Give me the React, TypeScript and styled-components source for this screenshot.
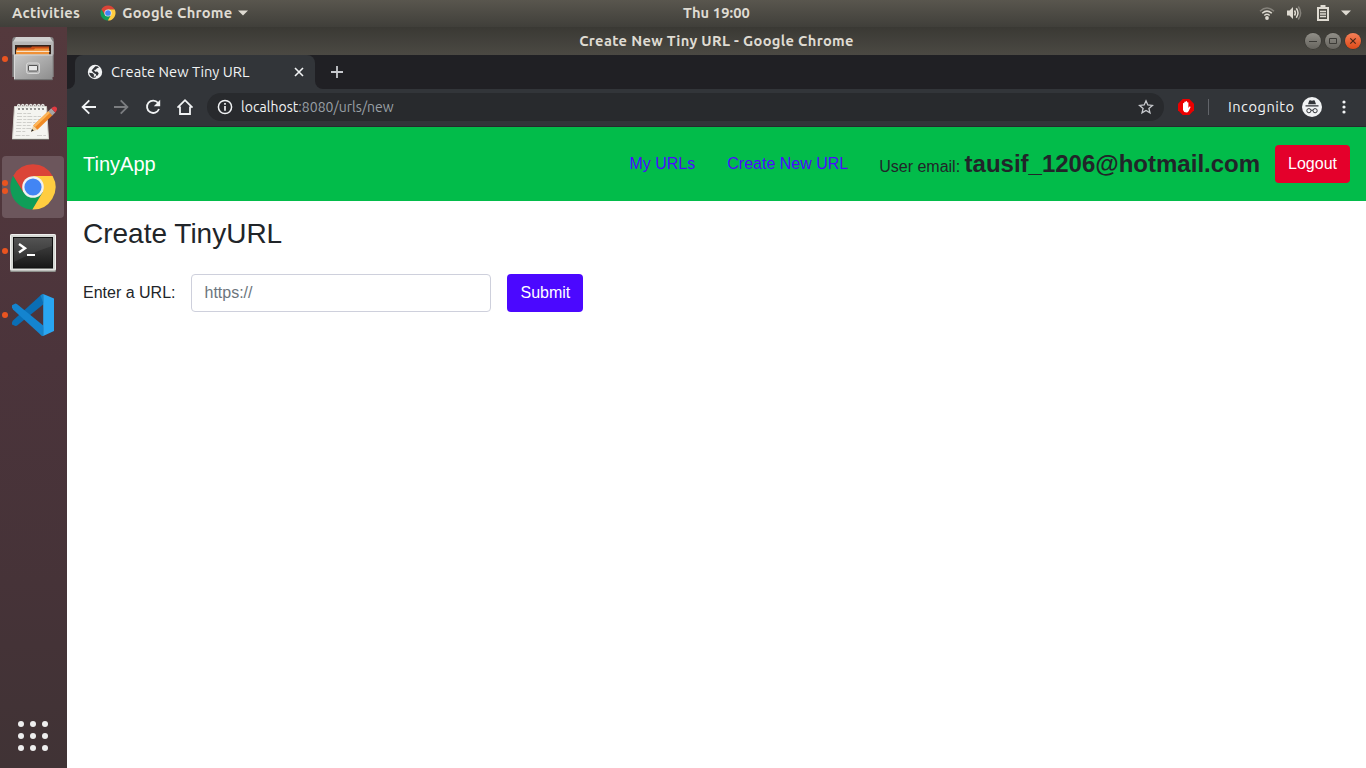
import React from "react";
import styled, { createGlobalStyle } from "styled-components";

const GlobalStyle = createGlobalStyle`
  * { box-sizing: border-box; }
  body { margin: 0; overflow: hidden; background: #fff; }
  button, input { font: inherit; margin: 0; }
`;

const uiFont = `"Ubuntu", "Noto Sans", "Open Sans", sans-serif`;

const Desktop = styled.div`
  width: 1366px;
  height: 768px;
  display: flex;
  flex-direction: column;
  font-family: ${uiFont};
`;

const TopBar = styled.header`
  height: 27px;
  flex: none;
  display: grid;
  grid-template-columns: 1fr auto 1fr;
  align-items: center;
  padding-bottom: 1px;
  background: linear-gradient(#59564e, #403f3a);
  color: #dfdbd2;
`;

const Label = styled.span<{ $size: number; $spacing?: number; $bold?: boolean; $color?: string }>`
  font-size: ${(p) => p.$size}px;
  letter-spacing: ${(p) => p.$spacing ?? 0}px;
  font-weight: ${(p) => (p.$bold ? 700 : 400)};
  color: ${(p) => p.$color ?? "inherit"};
  line-height: 20px;
  white-space: pre;
`;

const TopLeft = styled.div`
  display: flex;
  align-items: center;
  padding-left: 12px;
`;

const AppMenu = styled.div`
  display: flex;
  align-items: center;
  margin-left: 20px;
  gap: 6px;
`;

const Clock = styled.div`
  padding-left: 67px;
`;

const Tray = styled.div`
  display: flex;
  justify-content: flex-end;
  align-items: center;
  padding-right: 15px;
  svg { display: block; flex: none; }
`;

const Gap = styled.span<{ $w: number }>`
  flex: none;
  width: ${(p) => p.$w}px;
`;

const Main = styled.div`
  flex: 1;
  min-height: 0;
  display: flex;
`;

const Dock = styled.nav`
  width: 67px;
  flex: none;
  display: flex;
  flex-direction: column;
  justify-content: space-between;
  padding: 1px 3px 17px 2px;
  background: linear-gradient(#54393d, #4b343b 45%, #463338 75%, #403335);
`;

const DockApps = styled.div`
  display: flex;
  flex-direction: column;
  gap: 2px;
`;

const DockTile = styled.div<{ $active?: boolean }>`
  height: 62px;
  display: flex;
  align-items: center;
  border-radius: 4px;
  background: ${(p) => (p.$active ? "#6c565c" : "transparent")};
`;

const Dots = styled.div`
  width: 6px;
  display: flex;
  flex-direction: column;
  gap: 2px;
`;

const Dot = styled.i`
  width: 6px;
  height: 6px;
  border-radius: 50%;
  background: #e95420;
`;

const AppsButton = styled.div`
  display: grid;
  grid-template-columns: repeat(3, 6px);
  grid-template-rows: repeat(3, 6px);
  gap: 6px;
  margin-left: 16px;
  i { border-radius: 50%; background: #eee; }
`;

const Window = styled.section`
  flex: 1;
  min-width: 0;
  display: flex;
  flex-direction: column;
`;

const TitleBar = styled.div`
  height: 28px;
  flex: none;
  display: grid;
  grid-template-columns: 1fr auto 1fr;
  align-items: center;
  background: linear-gradient(#3a3934, #4b4943);
  color: #dfdbd2;
`;

const WindowButtons = styled.div`
  display: flex;
  justify-content: flex-end;
  gap: 4px;
  padding-right: 5px;
`;

const WindowButton = styled.span<{ $close?: boolean }>`
  width: 16px;
  height: 16px;
  border-radius: 50%;
  background: ${(p) => (p.$close ? "linear-gradient(#f58058, #df4a18)" : "linear-gradient(#918f88, #66645e)")};
  box-shadow: 0 0 0 0.5px #33322d;
  svg { display: block; }
`;

const TabStrip = styled.div`
  height: 34px;
  flex: none;
  display: flex;
  align-items: flex-end;
  background: #202024;
`;

const TabFoot = styled.span<{ $right?: boolean }>`
  width: 8px;
  height: 8px;
  background: #323539;
  &::before {
    content: "";
    display: block;
    width: 8px;
    height: 8px;
    background: #202024;
    border-radius: ${(p) => (p.$right ? "0 0 0 8px" : "0 0 8px 0")};
  }
`;

const Tab = styled.div`
  width: 240px;
  height: 34px;
  display: flex;
  align-items: center;
  padding: 0 10px 0 12px;
  background: #323539;
  border-radius: 8px 8px 0 0;
  color: #f1f3f4;
  svg { display: block; flex: none; }
`;

const TabTitle = styled.div`
  flex: 1;
  display: flex;
  padding-left: 8px;
`;

const NewTab = styled.div`
  height: 34px;
  display: flex;
  align-items: center;
  padding-left: 8px;
`;

const Toolbar = styled.div`
  height: 38px;
  flex: none;
  display: flex;
  align-items: center;
  padding: 0 13px 2px;
  background: #323539;
  border-bottom: 1px solid #28292d;
  color: #f1f3f4;
  svg { display: block; flex: none; }
`;

const NavIcons = styled.div`
  display: flex;
  gap: 14px;
`;

const AddressBar = styled.div`
  width: 957px;
  height: 28px;
  display: flex;
  align-items: center;
  margin: 0 12px 0 13px;
  padding: 0 9px 0 9px;
  border-radius: 14px;
  background: #282a2d;
`;

const Url = styled.div`
  flex: 1;
  padding-left: 7px;
`;

const Divider = styled.span`
  width: 1px;
  height: 16px;
  background: #62656a;
`;

const Incognito = styled.div`
  width: 74px;
  display: flex;
`;

const Page = styled.main`
  flex: 1;
  background: #fff;
  color: #212529;
  font: 16px/24px "Liberation Sans", Arial, sans-serif;
`;

const Navbar = styled.div`
  height: 74px;
  display: flex;
  align-items: center;
  justify-content: space-between;
  padding: 0 16px;
  background: #02bc4a;
`;

const Brand = styled.a`
  font-size: 20px;
  line-height: 30px;
  color: #fff;
`;

const NavLinks = styled.div`
  display: flex;
  align-items: center;
`;

const NavLink = styled.a`
  margin-right: 32px;
  padding-bottom: 1px;
  color: #4b08ff;
  &:nth-child(2) { margin-right: 31px; }
`;

const UserEmail = styled.span`
  margin-right: 15px;
  padding-top: 2px;
  line-height: 36px;
  b { font-size: 24px; }
`;

const Button = styled.button<{ $bg: string }>`
  height: 38px;
  padding: 0 13px;
  border: 0;
  border-radius: 4px;
  color: #fff;
  background: ${(p) => p.$bg};
`;

const Content = styled.div`
  padding: 16px;
`;

const Heading = styled.h1`
  margin: 0 0 23px;
  font-size: 28px;
  font-weight: 400;
  line-height: 34px;
`;

const UrlForm = styled.form`
  display: flex;
  align-items: center;
  gap: 16px;
`;

const UrlInput = styled.input`
  width: 300px;
  height: 38px;
  padding: 6px 12px;
  border: 1px solid #ced0dc;
  border-radius: 4px;
  background: #fff;
  &::placeholder { color: #6c757d; opacity: 1; }
`;

const ChromeLogo = ({ size }: { size: number }) => (
  <svg width={size} height={size} viewBox="0 0 48 48">
    <path d="M4.3 12.8A22.5 22.5 0 0 0 23.6 46.5L33.5 29.5 24 24 14.5 29.5Z" fill="#0f9d58" />
    <path d="M24 13H43.6A22.5 22.5 0 0 1 23.4 46.5L33.5 29.5Z" fill="#ffcd40" />
    <path d="M4.3 12.8A22.5 22.5 0 0 1 43.6 13H24L14.5 29.5Z" fill="#db4437" />
    <circle cx="24" cy="24" r="10.8" fill="#f1f1f1" />
    <circle cx="24" cy="24" r="8.6" fill="#4285f4" />
  </svg>
);

const FilesIcon = () => (
  <svg width="50" height="50" viewBox="8 34 50 50">
    <defs>
      <linearGradient id="cabinet" x1="0" y1="0" x2="1" y2="1">
        <stop stopColor="#c9c9c9" /><stop offset="1" stopColor="#8c8c8c" />
      </linearGradient>
    </defs>
    <path d="M12.300 77V40q0-3 3-3h35.400q3 0 3 3v37Z" fill="#858585" />
    <path d="M13 42l3-5h34l3 5Z" fill="#cecece" />
    <path d="M12.500 41.500h41v13h-41Z" fill="#b7b7b7" />
    <path d="M15 45h36v10H15Z" fill="#33231c" />
    <path d="M17 47.500h14l1-1h17V51H17Z" fill="#c94f18" />
    <path d="M16 49.500h18l1-1h14v7H16Z" fill="#ef9137" />
    <path d="M16.500 51.400h33" stroke="#f7ead9" />
    <path d="M14 54.500h38.500V80H14Z" fill="url(#cabinet)" />
    <path d="M14 55h38.500M14.500 55v25" stroke="#d8d8d8" />
    <path d="M14 79.700h38.500" stroke="#6c6c6c" />
    <rect x="26.500" y="63" width="13" height="10.500" rx="2" fill="#b5b5b5" stroke="#d8d8d8" />
    <rect x="28.500" y="65.500" width="9" height="5.500" rx=".5" fill="#e7e7e7" stroke="#555" />
  </svg>
);

const NotesIcon = () => (
  <svg width="50" height="50" viewBox="8 98 50 50">
    <path d="M14.500 106.500H46.500L48.500 139H12.500Z" fill="#f4f4f0" stroke="#d2d2cb" />
    <path d="M12.500 139.500H49" stroke="#6e6a66" />
    <g stroke="#cfcfcb" strokeWidth="1" strokeDasharray="5 1.300 3 1">
      <path d="M17 113.500h14M17 116.500h24M17 119.500h26M16.500 122.500h19M16.500 125.500h14M16 128.500h17M16 131.500h10M15.500 135.500h14M37 135.500h9" />
    </g>
    <g fill="none" stroke="#e9e9e6" strokeWidth="1.400">
      <path d="M17.500 109v-2.500a1.300 2 0 0 1 2.600 0M21.500 109v-2.500a1.300 2 0 0 1 2.600 0M25.500 109v-2.500a1.300 2 0 0 1 2.600 0M29.500 109v-2.500a1.300 2 0 0 1 2.600 0M33.500 109v-2.500a1.300 2 0 0 1 2.600 0M37.500 109v-2.500a1.300 2 0 0 1 2.600 0M41.500 109v-2.500a1.300 2 0 0 1 2.600 0" />
    </g>
    <g fill="#666"><circle cx="19" cy="109" r=".9" /><circle cx="23" cy="109" r=".9" /><circle cx="27" cy="109" r=".9" /><circle cx="31" cy="109" r=".9" /><circle cx="35" cy="109" r=".9" /><circle cx="39" cy="109" r=".9" /><circle cx="43" cy="109" r=".9" /></g>
    <path d="M31 131.700l2.200-6.200 4.200 4.300Z" fill="#f0d5a5" />
    <path d="M31 131.700l1-2.800 1.800 1.700Z" fill="#222" />
    <path d="M33.200 125.500l15.300-14.500 4 4.200-15.100 14.600Z" fill="#f08a24" />
    <path d="M33.600 125.300l15-14.300 1.600 1.700-15 14.200Z" fill="#fdb75a" />
    <path d="M48.300 111.200l3-2.900 4 4.200-3 2.900Z" fill="#a5a5a5" />
    <path d="M51.300 108.300q3-3 5-1t-1 5.200Z" fill="#e23a41" />
  </svg>
);

const TerminalIcon = () => (
  <svg width="50" height="50" viewBox="8 226 50 50">
    <defs>
      <linearGradient id="screen" x1="0" y1="0" x2="0" y2="1">
        <stop stopColor="#474747" /><stop offset=".5" stopColor="#303030" /><stop offset="1" stopColor="#171717" />
      </linearGradient>
    </defs>
    <rect x="10" y="234" width="46" height="38" rx="1.500" fill="#8e908c" />
    <rect x="10.500" y="234.500" width="45" height="35.500" rx="1" fill="#d5d7d3" stroke="#f0f0ee" />
    <rect x="13.500" y="237.500" width="39" height="30.500" fill="url(#screen)" stroke="#111" />
    <path d="M14 238h38v8Q34 252 14 262Z" fill="#fff" opacity=".07" />
    <path d="M19 244l6 4.200-6 4.300" fill="none" stroke="#fff" strokeWidth="2.400" />
    <path d="M27 255h8" stroke="#fff" strokeWidth="2" />
  </svg>
);

const VsCodeIcon = () => (
  <svg width="50" height="50" viewBox="8 290 50 50">
    <path d="M12 322.300v2.200l3.300 1.500 1.500-.3L43.200 304.500V294L41 295 13 320.500Z" fill="#0a6eb5" />
    <path d="M12 307.500v-2.200l3.400-1.700 1.500.4L43.200 325.500V336l-2-.8L13 309.500Z" fill="#1484cf" />
    <path d="M43.200 294 54 298.500V331L43.200 336Z" fill="#29a6f2" />
    <path d="M43.200 294q-1.400 0-2.700 1.500L43.200 303ZM43.200 336q-1.400 0-2.700-1.500L43.200 327Z" fill="#1684c9" />
  </svg>
);

const Caret = () => (
  <svg width="10" height="6" viewBox="0 0 10 6"><path d="M0 .5h10L5 5.500Z" fill="#dfdbd2" /></svg>
);

const WifiIcon = () => (
  <svg width="16" height="16" viewBox="0 0 16 16" fill="none" stroke="#dfdbd2" strokeWidth="1.500">
    <path d="M1 6.200Q8-.3 15 6.200" stroke="#85827b" />
    <path d="M3.200 8.300Q8 3.900 12.800 8.300M5.300 10.500Q8 8.100 10.700 10.500" />
    <circle cx="8" cy="13" r="1.900" fill="#dfdbd2" stroke="none" />
  </svg>
);

const VolumeIcon = () => (
  <svg width="16" height="16" viewBox="0 0 16 16" fill="none" stroke="#dfdbd2" strokeWidth="1.500">
    <path d="M1 5.500h2.500L7 2v12L3.500 10.500H1Z" fill="#dfdbd2" stroke="none" />
    <path d="M8.500 5.500q1.800 2.500 0 5M10.300 3.300q3.400 4.700 0 9.400" />
    <path d="M12.300 1.500q4.700 6.500 0 13" stroke="#85827b" />
  </svg>
);

const BatteryIcon = () => (
  <svg width="12" height="16" viewBox="0 0 12 16">
    <path d="M3.500 0h5v2H12v14H0V2h3.500ZM2 4v10h8V4Z" fill="#dfdbd2" fillRule="evenodd" />
    <path d="M3 6.500h6M3 9h6M3 11.500h6" stroke="#dfdbd2" strokeWidth="1.300" />
  </svg>
);

const GlobeIcon = () => (
  <svg width="16" height="16" viewBox="0 0 16 16">
    <circle cx="8" cy="8" r="7.200" fill="#f1f3f4" />
    <path d="M8.300 2.300c1.500-.4 2.800.2 3.700 1.200L10 4.200 8.600 5.700 7 6 8.200 7.800l2-.4 1.500 1.800-1 2.200-1.700.4-.3 1.800c-3.300.8-6.200-1.800-6.500-4.900l3.500.5 1.600 1.900-.8 1.200 1.300.4 1-.9.3-1.600L7 9.200 5.600 7.700 4.600 6.600 6 4.700Z" fill="#323539" />
  </svg>
);

const StrokeIcon = styled.svg.attrs({ viewBox: "0 0 18 18", width: 18, height: 18 })<{ $dim?: boolean }>`
  fill: none;
  stroke: ${(p) => (p.$dim ? "#7b7d80" : "#f1f3f4")};
  stroke-width: 1.8;
`;

const IncognitoIcon = () => (
  <svg width="20" height="20" viewBox="0 0 20 20">
    <circle cx="10" cy="10" r="10" fill="#f1f3f4" />
    <path d="M6 7.300l1.300-3.700q.3-.6 1-.4l1.700.5 1.700-.5q.7-.2 1 .4L14 7.300ZM3.500 8.300h13v1.200h-13Z" fill="#323539" />
    <g fill="none" stroke="#323539" strokeWidth="1"><circle cx="6.900" cy="13.700" r="2.100" /><circle cx="13.100" cy="13.700" r="2.100" /><path d="M9 13.400q1-.7 2 0" /></g>
  </svg>
);

const BlockerIcon = () => (
  <svg width="16" height="16" viewBox="0 0 16 16">
    <path d="M4.700 0h6.600L16 4.700v6.600L11.300 16H4.700L0 11.300V4.700Z" fill="#eb0000" />
    <path d="M5 8V4.300q.7-.8 1.300 0V3q.7-.9 1.400 0v-.6q.7-.8 1.400 0V3.500q.7-.7 1.300 0V9l1-1.400q.9-.5 1.200.3l-1.900 4Q9.800 13.500 8.500 13.500 5.700 13.500 5 11Z" fill="#fff" />
  </svg>
);

export default function App() {
  return (
    <Desktop>
      <GlobalStyle />
      <TopBar>
        <TopLeft>
          <Label $size={14.667} $bold $spacing={0.3}>Activities</Label>
          <AppMenu>
            <ChromeLogo size={16} />
            <Label $size={14.667} $bold $spacing={0.28}>Google Chrome</Label>
            <Caret />
          </AppMenu>
        </TopLeft>
        <Clock><Label $size={14.667} $bold $spacing={0.1}>Thu 19:00</Label></Clock>
        <Tray>
          <WifiIcon /><Gap $w={11} /><VolumeIcon /><Gap $w={15} /><BatteryIcon /><Gap $w={12} /><Caret />
        </Tray>
      </TopBar>
      <Main>
        <Dock>
          <DockApps>
            <DockTile><Dots><Dot /></Dots><FilesIcon /></DockTile>
            <DockTile><Dots /><NotesIcon /></DockTile>
            <DockTile $active><Dots><Dot /><Dot /></Dots><Gap $w={1} /><ChromeLogo size={48} /></DockTile>
            <DockTile><Dots><Dot /></Dots><TerminalIcon /></DockTile>
            <DockTile><Dots><Dot /></Dots><VsCodeIcon /></DockTile>
          </DockApps>
          <AppsButton>{Array.from({ length: 9 }, (_, i) => <i key={i} />)}</AppsButton>
        </Dock>
        <Window>
          <TitleBar>
            <span />
            <Label $size={14.667} $bold $spacing={0.33}>Create New Tiny URL - Google Chrome</Label>
            <WindowButtons>
              <WindowButton><svg width="16" height="16"><path d="M4 8.500h8" stroke="#3c3b37" /></svg></WindowButton>
              <WindowButton><svg width="16" height="16"><path d="M4.500 5.500h7v5h-7Z" fill="none" stroke="#3c3b37" /></svg></WindowButton>
              <WindowButton $close><svg width="16" height="16"><path d="M5.300 5.300l5.400 5.400M10.700 5.300l-5.400 5.400" stroke="#4b2717" strokeWidth="1.200" /></svg></WindowButton>
            </WindowButtons>
          </TitleBar>
          <TabStrip>
            <TabFoot />
            <Tab>
              <GlobeIcon />
              <TabTitle><Label $size={14.667} $spacing={0.03}>Create New Tiny URL</Label></TabTitle>
              <svg width="12" height="12" stroke="#f1f3f4" strokeWidth="1.600"><path d="M2 2l8 8M10 2l-8 8" /></svg>
            </Tab>
            <TabFoot $right />
            <NewTab><svg width="12" height="12" stroke="#c8cace" strokeWidth="1.800"><path d="M6 0v12M0 6h12" /></svg></NewTab>
          </TabStrip>
          <Toolbar>
            <NavIcons>
              <StrokeIcon><path d="M16 9H3M9.300 2.300L2.600 9l6.700 6.700" /></StrokeIcon>
              <StrokeIcon $dim><path d="M2 9h13M8.700 2.300L15.400 9l-6.700 6.700" /></StrokeIcon>
              <StrokeIcon><path d="M14 4.800A6.200 6.200 0 1 0 15 11" /><path d="M16.200 1.800v6.400H9.800Z" fill="#f1f3f4" stroke="none" /></StrokeIcon>
              <StrokeIcon><path d="M1.500 9.700L9 2.200l7.500 7.500M4 8.500V16h10V8.500" /></StrokeIcon>
            </NavIcons>
            <AddressBar>
              <svg width="18" height="18" fill="none" stroke="#f1f3f4" strokeWidth="1.500"><circle cx="9" cy="9" r="6.600" /><path d="M9 8v4.800M9 5v1.700" strokeWidth="1.700" /></svg>
              <Url>
                <Label $size={14} $spacing={0.04}>localhost</Label>
                <Label $size={14} $spacing={0.04} $color="#9aa0a6">:8080/urls/new</Label>
              </Url>
              <svg width="18" height="18" fill="none" stroke="#c8cace" strokeWidth="1.300"><path d="M9 2.800l1.800 4.200 4.600.4-3.500 3 1.100 4.500L9 12.500l-4 2.400 1.100-4.500-3.500-3 4.600-.4Z" /></svg>
            </AddressBar>
            <Gap $w={2} />
            <BlockerIcon />
            <Gap $w={14} />
            <Divider />
            <Gap $w={19} />
            <Incognito><Label $size={14.667} $spacing={0.5}>Incognito</Label></Incognito>
            <IncognitoIcon />
            <Gap $w={20} />
            <svg width="4" height="16" fill="#f1f3f4"><circle cx="2" cy="3" r="1.600" /><circle cx="2" cy="8" r="1.600" /><circle cx="2" cy="13" r="1.600" /></svg>
          </Toolbar>
          <Page>
            <Navbar>
              <Brand>TinyApp</Brand>
              <NavLinks>
                <NavLink>My URLs</NavLink>
                <NavLink>Create New URL</NavLink>
                <UserEmail>User email: <b>tausif_1206@hotmail.com</b></UserEmail>
                <Button $bg="#e4002b">Logout</Button>
              </NavLinks>
            </Navbar>
            <Content>
              <Heading>Create TinyURL</Heading>
              <UrlForm>
                <label htmlFor="longURL">Enter a URL:</label>
                <UrlInput id="longURL" placeholder="https://" />
                <Button type="button" $bg="#4b08ff">Submit</Button>
              </UrlForm>
            </Content>
          </Page>
        </Window>
      </Main>
    </Desktop>
  );
}
